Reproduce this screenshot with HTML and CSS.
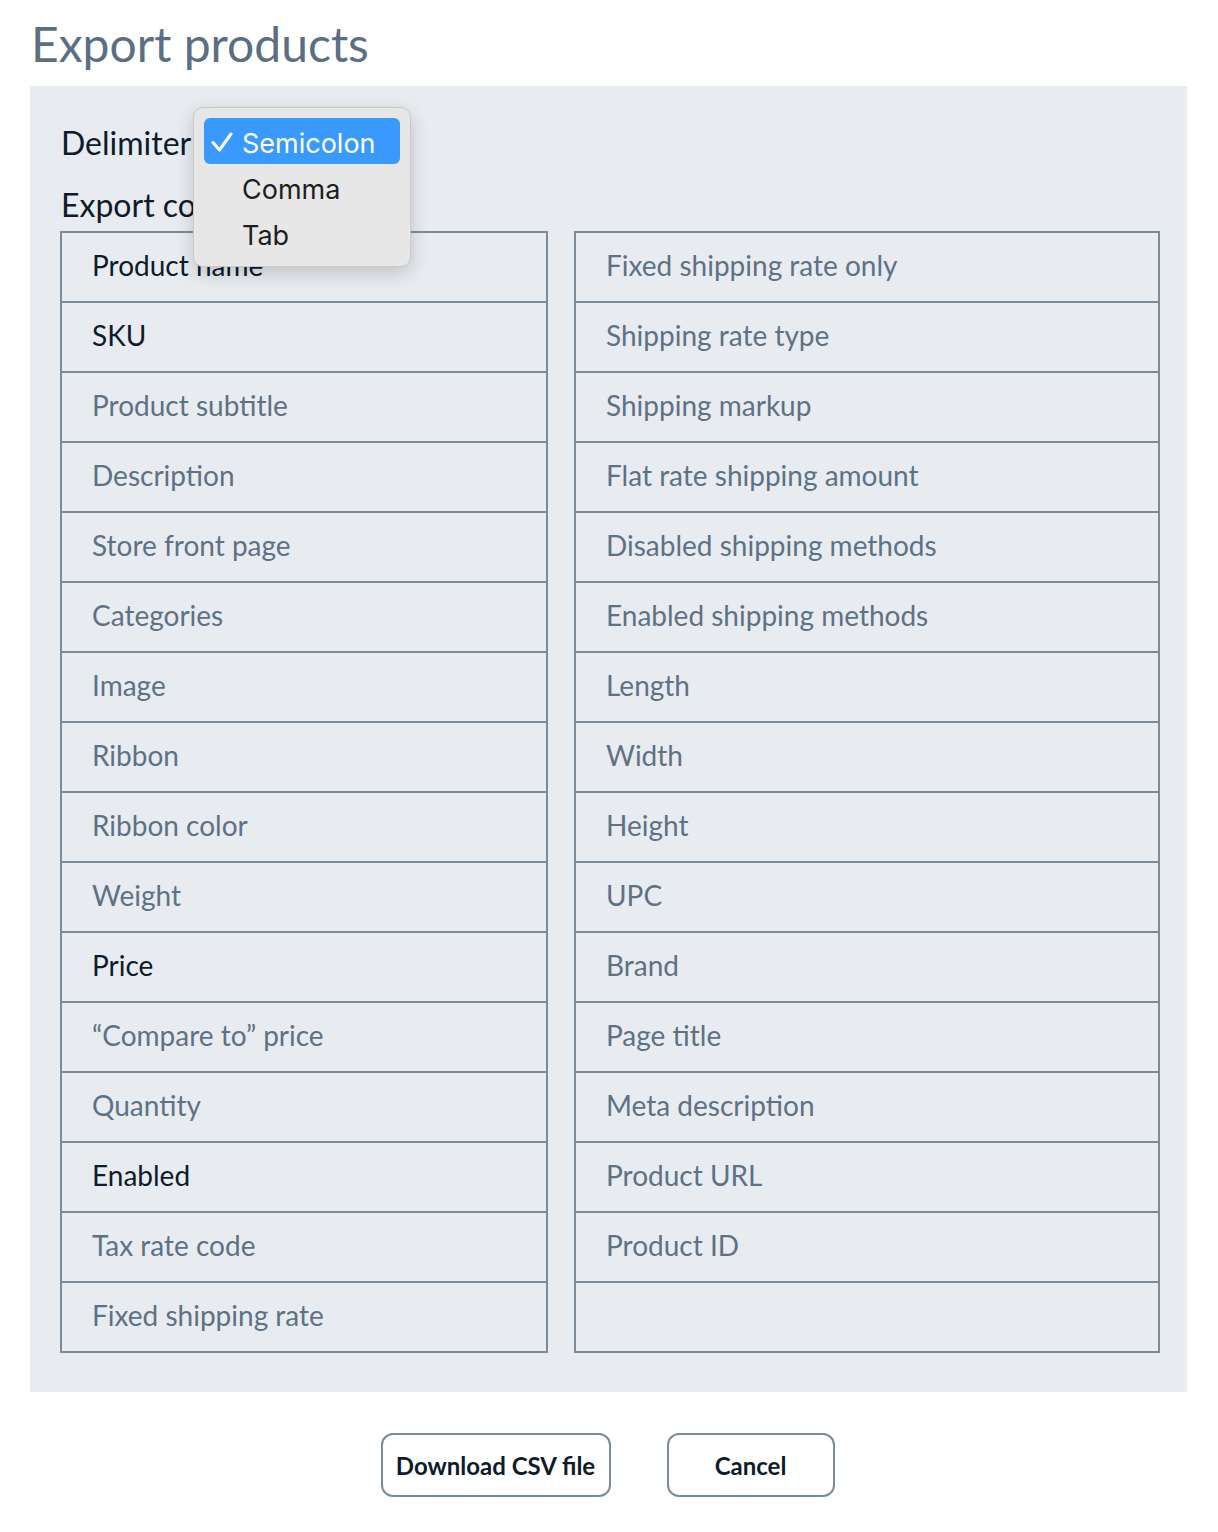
FILE: index.html
```html
<!DOCTYPE html>
<html>
<head>
<meta charset="utf-8">
<link rel="stylesheet" href="styles.css">
</head>
<body>
<h1 class="title">Export products</h1>
<div class="panel">
  <div class="field-label delim">Delimiter</div>
  <div class="field-label cols">Export columns</div>
  <div class="tables">
    <div class="table">
      <div class="row strong">Product name</div>
      <div class="row strong">SKU</div>
      <div class="row">Product subtitle</div>
      <div class="row">Description</div>
      <div class="row">Store front page</div>
      <div class="row">Categories</div>
      <div class="row">Image</div>
      <div class="row">Ribbon</div>
      <div class="row">Ribbon color</div>
      <div class="row">Weight</div>
      <div class="row strong">Price</div>
      <div class="row">“Compare to” price</div>
      <div class="row">Quantity</div>
      <div class="row strong">Enabled</div>
      <div class="row">Tax rate code</div>
      <div class="row">Fixed shipping rate</div>
    </div>
    <div class="table">
      <div class="row">Fixed shipping rate only</div>
      <div class="row">Shipping rate type</div>
      <div class="row">Shipping markup</div>
      <div class="row">Flat rate shipping amount</div>
      <div class="row">Disabled shipping methods</div>
      <div class="row">Enabled shipping methods</div>
      <div class="row">Length</div>
      <div class="row">Width</div>
      <div class="row">Height</div>
      <div class="row">UPC</div>
      <div class="row">Brand</div>
      <div class="row">Page title</div>
      <div class="row">Meta description</div>
      <div class="row">Product URL</div>
      <div class="row">Product ID</div>
      <div class="row"></div>
    </div>
  </div>
</div>
<div class="actions">
  <button class="btn btn-download">Download CSV file</button>
  <button class="btn btn-cancel">Cancel</button>
</div>
<div class="menu">
  <div class="opt selected"><svg class="check" width="22" height="20" viewBox="0 0 22 20"><polyline points="2,10.5 8.5,18 20,2" fill="none" stroke="#ffffff" stroke-width="3" stroke-linecap="round" stroke-linejoin="round"/></svg>Semicolon</div>
  <div class="opt">Comma</div>
  <div class="opt">Tab</div>
</div>
</body>
</html>
```
FILE: styles.css
```css
html, body {
  margin: 0;
  padding: 0;
  background: #ffffff;
}
body {
  font-family: "Lato", "Liberation Sans", sans-serif;
  width: 1218px;
  position: relative;
}
.title {
  margin: 0;
  padding: 14px 0 0 31px;
  height: 86px;
  box-sizing: border-box;
  font-size: 48px;
  line-height: 60px;
  font-weight: 400;
  color: #5c6f82;
}
.panel {
  margin: 0 31px 0 30px;
  background: #e8ecf0;
  padding: 32px 27px 39px 30px;
}
.field-label {
  font-size: 32px;
  line-height: 50px;
  color: #0d1b2a;
  padding-left: 1px;
}
.cols {
  margin-top: 12px;
}
.tables {
  display: grid;
  grid-template-columns: 488px 586px;
  column-gap: 26px;
  margin-top: 1px;
}
.table {
  border: 2px solid #7c8b99;
  display: flex;
  flex-direction: column;
}
.row {
  height: 68px;
  box-sizing: border-box;
  padding-left: 30px;
  padding-bottom: 4px;
  display: flex;
  align-items: center;
  font-size: 28px;
  color: #5e7185;
}
.row + .row {
  border-top: 2px solid #7c8b99;
  height: 70px;
}
.row.strong {
  color: #0d1b2a;
}
.actions {
  display: flex;
  justify-content: center;
  gap: 56px;
  padding-top: 41px;
  padding-right: 3px;
}
.btn {
  font-family: "Lato", "Liberation Sans", sans-serif;
  font-weight: 700;
  font-size: 24px;
  color: #0d1b2a;
  background: #ffffff;
  border: 2px solid #7c8b99;
  border-radius: 12px;
  height: 64px;
  padding: 0;
}
.btn-download {
  width: 230px;
}
.btn-cancel {
  width: 168px;
}
.menu {
  position: absolute;
  left: 193px;
  top: 107px;
  width: 218px;
  height: 160px;
  box-sizing: border-box;
  padding: 10px;
  background: #e7e7e7;
  border: 1px solid #c9c9c9;
  border-radius: 10px;
  box-shadow: 0 6px 18px rgba(0, 0, 0, 0.18);
  font-family: "Inter", "Noto Sans", sans-serif;
}
.opt {
  height: 46px;
  line-height: 46px;
  padding-top: 3px;
  box-sizing: border-box;
  padding-left: 38px;
  position: relative;
  font-size: 27px;
  color: #1e1e1e;
  border-radius: 6px;
}
.opt.selected {
  background: #3a99fc;
  color: #ffffff;
}
.check {
  position: absolute;
  left: 7px;
  top: 14px;
}
```
